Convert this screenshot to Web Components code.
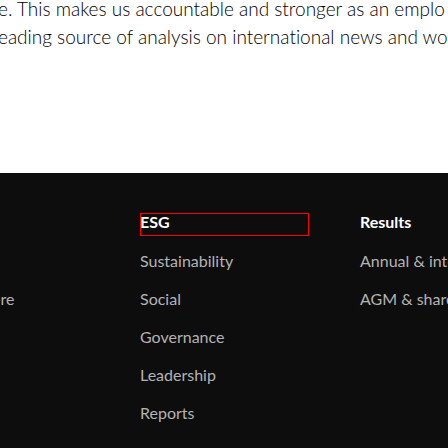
<!DOCTYPE html>
<html lang="en">
<head>
<meta charset="utf-8">
<title>ESG</title>
<style>
body { margin: 0; background: #fff; overflow: hidden; font-family: Lato, "Open Sans", sans-serif; font-variant-ligatures: none; }
</style>
</head>
<body>
<page-shell>
  <intro-copy>
    <span>e. This makes us accountable and stronger as an emplo</span>
    <span>eading source of analysis on international news and wo</span>
  </intro-copy>
  <site-footer>
    <link-column class="edge" items="|ere"></link-column>
    <link-column heading="ESG" highlighted items="Sustainability|Social|Governance|Leadership|Reports"></link-column>
    <link-column heading="Results" items="Annual &amp; inte|AGM &amp; share"></link-column>
  </site-footer>
</page-shell>
<script>
class PageShell extends HTMLElement {
  constructor() {
    super();
    this.attachShadow({ mode: "open" }).innerHTML = `
      <style>:host { display: flex; flex-direction: column; min-height: 100vh; }
      ::slotted(site-footer) { flex: 1; }</style>
      <slot></slot>`;
  }
}
class IntroCopy extends HTMLElement {
  constructor() {
    super();
    this.attachShadow({ mode: "open" }).innerHTML = `
      <style>
        :host { display: block; overflow: hidden; padding-bottom: 122px; color: #000; }
        p { margin: -5px 0 0 -2px; font-size: 19px; line-height: 28px; font-weight: 300; white-space: nowrap; }
        ::slotted(span) { display: block; }
      </style>
      <p><slot></slot></p>`;
  }
}
class SiteFooter extends HTMLElement {
  constructor() {
    super();
    this.attachShadow({ mode: "open" }).innerHTML = `
      <style>
        :host { display: block; background: #0d0d0d; padding: 40px 0 20px; }
        nav { display: grid; grid-template-columns: minmax(0, 89fr) minmax(0, 169fr) minmax(0, 88fr); gap: 51px; }
        ::slotted(.edge) { margin-left: -8px; }
      </style>
      <nav aria-label="Footer"><slot></slot></nav>`;
  }
}
class LinkColumn extends HTMLElement {
  constructor() {
    super();
    this.attachShadow({ mode: "open" }).innerHTML = `
      <style>
        :host { display: block; font-size: 16px; line-height: 22px; white-space: nowrap; }
        h2 { margin: 0 0 14px; min-height: 23px; font-size: 16px; font-weight: 700; line-height: 18px; color: #fff; }
        :host([highlighted]) h2 { outline: 1px solid #f00; outline-offset: -1px; }
        ul { display: grid; gap: 16px; margin: 0; padding: 0; list-style: none; }
        li { min-height: 22px; }
        a { color: #b3b3b3; text-decoration: none; }
        a:hover { color: #fff; }
      </style>
      <h2></h2><ul></ul>`;
  }
  connectedCallback() {
    const root = this.shadowRoot;
    root.querySelector("h2").textContent = this.getAttribute("heading") || "";
    const list = root.querySelector("ul");
    list.replaceChildren(...this.getAttribute("items").split("|").map((text) => {
      const li = document.createElement("li");
      if (text) {
        const a = document.createElement("a");
        a.href = "#";
        a.textContent = text;
        li.append(a);
      }
      return li;
    }));
  }
}
customElements.define("page-shell", PageShell);
customElements.define("intro-copy", IntroCopy);
customElements.define("site-footer", SiteFooter);
customElements.define("link-column", LinkColumn);
</script>
</body>
</html>
